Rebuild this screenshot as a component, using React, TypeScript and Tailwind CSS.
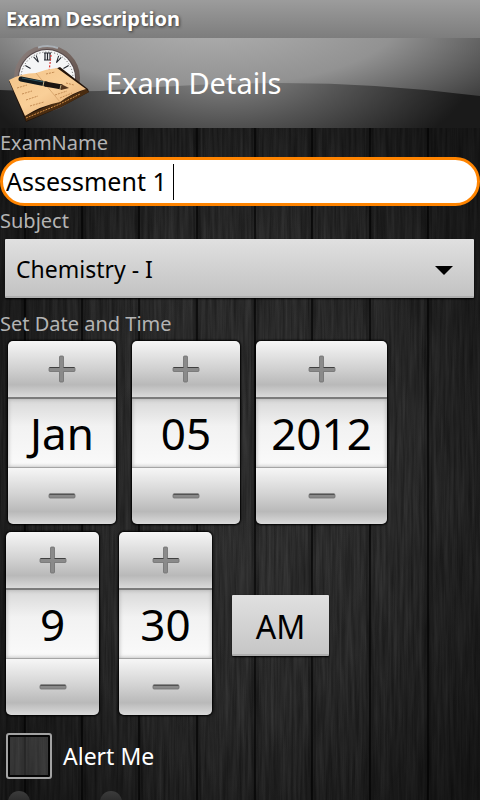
import { useState, type ReactNode } from "react";

const SEAMS = [25, 82, 139, 197, 255, 312, 370, 428];

function WoodBackground() {
  return (
    <svg className="absolute inset-0 -z-10 h-full w-full" viewBox="0 0 480 672" preserveAspectRatio="none" aria-hidden="true">
      <defs>
        <filter id="grain" x="0" y="0" width="100%" height="100%" colorInterpolationFilters="sRGB">
          <feTurbulence type="fractalNoise" baseFrequency="0.35 0.015" numOctaves="3" seed="11" />
          <feColorMatrix values="0.13 0 0 0 0.085  0.13 0 0 0 0.085  0.13 0 0 0 0.085  0 0 0 0 1" />
        </filter>
        <radialGradient id="woodShade" cx="50%" cy="50%" r="65%">
          <stop offset="0" stopColor="#000" stopOpacity="0" />
          <stop offset="0.55" stopColor="#000" stopOpacity="0.05" />
          <stop offset="1" stopColor="#000" stopOpacity="0.45" />
        </radialGradient>
        <radialGradient id="woodGlow" cx="55%" cy="52%" r="55%">
          <stop offset="0" stopColor="#fff" stopOpacity="0.04" />
          <stop offset="1" stopColor="#fff" stopOpacity="0" />
        </radialGradient>
      </defs>
      <rect width="480" height="672" fill="#242424" />
      <rect width="480" height="672" filter="url(#grain)" />
      <rect width="480" height="672" fill="url(#woodGlow)" />
      <rect width="480" height="672" fill="url(#woodShade)" />
      {SEAMS.map((x) => (
        <g key={x}>
          <rect x={x - 4} width="8" height="672" fill="#000" opacity="0.15" />
          <rect x={x - 1} width="2" height="672" fill="#000" opacity="0.6" />
        </g>
      ))}
    </svg>
  );
}

function ExamLogo() {
  const hours = Array.from({ length: 12 }, (_, i) => i * 30);
  return (
    <svg className="h-[90px] w-[98px] shrink-0" viewBox="0 0 98 90" aria-hidden="true">
      <defs>
        <linearGradient id="rim" x1="0" y1="0" x2="1" y2="1">
          <stop offset="0" stopColor="#8d8280" />
          <stop offset="0.5" stopColor="#75655f" />
          <stop offset="1" stopColor="#4a3d39" />
        </linearGradient>
        <linearGradient id="page" x1="0" y1="0" x2="1" y2="1">
          <stop offset="0" stopColor="#f3c489" />
          <stop offset="0.5" stopColor="#f9cf98" />
          <stop offset="1" stopColor="#e0a468" />
        </linearGradient>
      </defs>
      <circle cx="47" cy="40" r="33" fill="url(#rim)" />
      <path d="M38 9.500 A32 32 0 0 1 58 10" stroke="#a9b0b6" strokeWidth="2" fill="none" />
      <circle cx="47" cy="40" r="29" fill="#55484a" />
      <circle cx="47" cy="40" r="28" fill="#f5f6f7" />
      <circle cx="47" cy="40" r="26" fill="none" stroke="#555" strokeWidth="1" strokeDasharray="1 2" />
      {hours.map((a) => (
        <path
          key={a}
          transform={`rotate(${a} 47 40)`}
          d={a === 0 ? "M45 15 V22 M47.500 15 V22 M50 15 V22 M44 15 H51 M44 22 H51" : a === 300 || a === 60 ? "M47 15 V21" : "M46 15 L47.500 22 L49 15"}
          stroke="#20242c"
          strokeWidth={a === 0 ? 1.2 : 1}
          fill="none"
        />
      ))}
      <path d="M51 17 L49 34" stroke="#e03030" strokeWidth="1.200" strokeDasharray="2 1.500" />
      <path d="M9 43 L26 84 L61 69 L89 54 L88 51 L60 29 L55 31 Z" fill="#23140a" />
      <path d="M25 78 L26 83 L61 69 L89 54 L86 51 Z" fill="#4a2c10" />
      <path d="M26 80 L60 66 L80 56" stroke="#d59048" strokeWidth="1" strokeDasharray="2 1" fill="none" />
      <path d="M9 42 Q22 35 36 35 Q46 31 57 30 L86 51 Q72 55 60 64 Q40 68 25 78 Z" fill="url(#page)" />
      <path d="M36 35 L60 64" stroke="#dba970" strokeWidth="1" />
      <path d="M17 50 l10 -3 M22 56 l10 -3 M26 62 l12 -4 M30 68 l14 -4 M46 36 l9 -2 M66 45 l8 2 M55 57 l12 -4 M60 60 l12 -5" stroke="#c48c54" strokeWidth="1" strokeDasharray="2 1" />
      <path d="M21 41 L46 46" stroke="#10181c" strokeWidth="5" strokeLinecap="round" />
      <path d="M45 46 L62 49" stroke="#1b1410" strokeWidth="5" />
      <path d="M22 40 L44 44" stroke="#2f5561" strokeWidth="1" />
      <path d="M61 46 L69 50 L61 52 Z" fill="#51331c" />
      <path d="M44 43 L43 48 M61 47 L60 51" stroke="#c9b184" strokeWidth="1" />
    </svg>
  );
}

function StepIcon({ plus }: { plus?: boolean }) {
  return (
    <svg className="h-7 w-7" viewBox="0 0 28 28" aria-hidden="true">
      <path
        d={plus ? "M12.500 1 h2 q1 0 1 1 V12.500 H26 q1 0 1 1 v2 q0 1 -1 1 H15.500 V26 q0 1 -1 1 h-2 q-1 0 -1 -1 V16.500 H2 q-1 0 -1 -1 v-2 q0 -1 1 -1 H11.500 V2 q0 -1 1 -1 Z" : "M2 12 H26 q1 0 1 1 v2 q0 1 -1 1 H2 q-1 0 -1 -1 v-2 q0 -1 1 -1 Z"}
        fill="#8a8a8a"
        stroke="#707070"
        strokeWidth="0.800"
      />
      <path d={plus ? "M1.500 12.500 H11.500 M15.500 12.500 H26.500" : "M1.500 12.200 H26.500"} stroke="#404040" strokeWidth="1" />
    </svg>
  );
}

const stepStyle =
  "flex h-14 w-full items-center justify-center bg-[linear-gradient(#f6f6f6,#d2d2d2_48%,#b9b9b9_78%,#dadada)]";

function Picker({ label, initial, width }: { label: string; initial: string; width: string }) {
  const [value, setValue] = useState(initial);
  const step = (by: number) => {
    const n = Number(value);
    if (!Number.isNaN(n)) setValue(String(n + by).padStart(initial.length, "0"));
  };
  return (
    <div className={`${width} overflow-hidden rounded-[5px] shadow-[0_0_2px_1px_#000]`}>
      <button type="button" aria-label={`Increase ${label}`} onClick={() => step(1)} className={stepStyle}>
        <StepIcon plus />
      </button>
      <input
        aria-label={label}
        value={value}
        onChange={(e) => setValue(e.target.value)}
        className="block h-[71px] w-full border-t-2 border-b border-t-[#7b7b7b] border-b-[#a5a5a5] bg-linear-to-b from-[#d8d8d8] via-[#f2f2f2] via-40% to-[#fafafa] text-center text-[44px] leading-[68px] text-black shadow-[inset_0_0_4px_#aaa] outline-none"
      />
      <button type="button" aria-label={`Decrease ${label}`} onClick={() => step(-1)} className={stepStyle}>
        <StepIcon />
      </button>
    </div>
  );
}

function FieldLabel({ htmlFor, children }: { htmlFor?: string; children: ReactNode }) {
  return (
    <label htmlFor={htmlFor} className="block pt-px text-[20px] leading-7 text-[#b4b4b4]">
      {children}
    </label>
  );
}

export default function App() {
  const [name, setName] = useState("Assessment 1 ");
  return (
    <div className="flex h-screen flex-col overflow-hidden bg-black font-['Noto_Sans','Open_Sans',sans-serif]">
      <div className="flex h-[38px] shrink-0 items-center bg-linear-to-b from-[#9c9c9c] to-[#7d7d7d] px-1.5 text-[20px] font-bold text-white [text-shadow:1px_1px_3px_#333]">
        Exam Description
      </div>
      <header className="relative isolate flex h-[90px] shrink-0 items-center gap-2 bg-black">
        <svg className="absolute inset-0 -z-10 h-full w-full" viewBox="0 0 480 90" preserveAspectRatio="none" aria-hidden="true">
          <defs>
            <radialGradient id="sheen" gradientUnits="userSpaceOnUse" cx="0" cy="0" r="1" gradientTransform="translate(210 -20) scale(380 135)">
              <stop offset="0" stopColor="#b2b2b2" />
              <stop offset="0.5" stopColor="#929292" />
              <stop offset="1" stopColor="#2c2c2c" />
            </radialGradient>
            <radialGradient id="lower" gradientUnits="userSpaceOnUse" cx="0" cy="0" r="1" gradientTransform="translate(225 25) scale(250 120)">
              <stop offset="0" stopColor="#929292" />
              <stop offset="0.5" stopColor="#545454" />
              <stop offset="1" stopColor="#1a1a1a" />
            </radialGradient>
          </defs>
          <rect width="480" height="90" fill="url(#sheen)" />
          <path d="M0 52 Q40 54 100 53 Q200 45 280 45 Q380 45 480 58 V90 H0 Z" fill="url(#lower)" />
        </svg>
        <ExamLogo />
        <h1 className="text-[29px] text-white">Exam Details</h1>
      </header>
      <main className="relative isolate flex-1">
        <WoodBackground />
        <FieldLabel htmlFor="exam-name">ExamName</FieldLabel>
        <div className="flex h-[49px] items-center rounded-full border-3 border-[#ff8400] bg-white pl-[3px]">
          <input
            id="exam-name"
            value={name}
            onChange={(e) => setName(e.target.value)}
            className="h-9 field-sizing-content border-r border-black bg-transparent text-[25px] text-black outline-none"
          />
        </div>
        <FieldLabel htmlFor="subject">Subject</FieldLabel>
        <div className="relative mt-1 mr-1.5 ml-[5px]">
          <select
            id="subject"
            className="block h-[59px] w-full appearance-none rounded-[1px] border-b-2 border-[#aeaeae] bg-linear-to-b from-[#e0e0e0] to-[#c3c3c3] pt-1 pl-[11px] text-[23px] text-black shadow-[0_1px_2px_#000] outline-none"
          >
            <option>Chemistry - I</option>
          </select>
          <svg className="pointer-events-none absolute top-[27px] right-[21px] h-[9px] w-[18px]" viewBox="0 0 18 9" aria-hidden="true">
            <path d="M0 0 H18 L9 9 Z" fill="#000" />
          </svg>
        </div>
        <fieldset className="mt-[11px]">
          <legend className="pt-px text-[20px] leading-7 text-[#b4b4b4]">Set Date and Time</legend>
          <div className="mt-[3px] flex gap-4 px-2">
            <Picker label="Month" initial="Jan" width="w-[108px]" />
            <Picker label="Day" initial="05" width="w-[108px]" />
            <Picker label="Year" initial="2012" width="w-[131px]" />
          </div>
          <div className="mt-2 flex items-center gap-5 px-1.5">
            <Picker label="Hour" initial="9" width="w-[93px]" />
            <Picker label="Minute" initial="30" width="w-[93px]" />
            <button type="button" className="mt-1 h-[61px] w-[97px] rounded-[1px] border-b-2 border-[#aeaeae] bg-linear-to-b from-[#e0e0e0] to-[#c6c6c6] pt-1 text-[32px] text-black shadow-[0_1px_2px_#000]">
              AM
            </button>
          </div>
        </fieldset>
        <label className="mt-[18px] flex items-center gap-[11px] pl-1.5 text-[23px] text-white">
          <input type="checkbox" className="h-[46px] w-[46px] appearance-none rounded-[3px] border-2 border-[#a3a3a3] bg-[#fff2] shadow-[inset_0_0_0_2px_#050505]" />
          Alert Me
        </label>
        <div className="mt-3 flex gap-[70px] pl-2">
          <input type="radio" name="alert" aria-label="Alarm" className="h-[22px] w-[22px] appearance-none rounded-full bg-linear-to-b from-[#3c3c3c] to-[#1c1c1c]" />
          <input type="radio" name="alert" aria-label="Notification" className="h-[22px] w-[22px] appearance-none rounded-full bg-linear-to-b from-[#3c3c3c] to-[#1c1c1c]" />
        </div>
      </main>
    </div>
  );
}
